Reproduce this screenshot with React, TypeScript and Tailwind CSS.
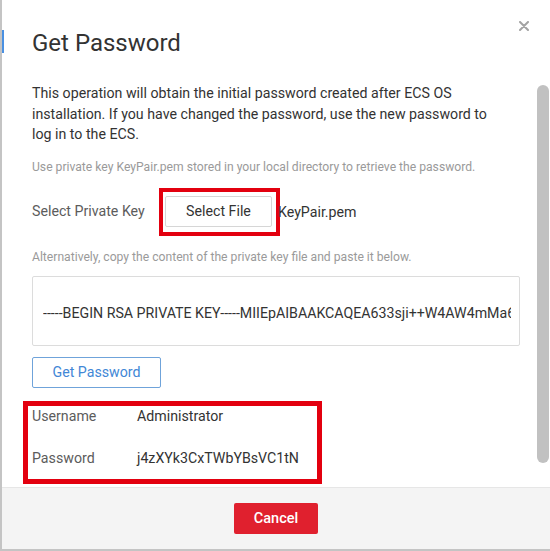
import React from "react";

export default function App() {
  return (
    <div className="relative w-[550px] h-[551px] bg-white border-l-2 border-b-2 border-[#c4c4c4] flex flex-col overflow-hidden font-['Roboto',sans-serif] text-[#333]">
      {/* background accent peeking at left edge */}
      <div className="absolute left-[-2px] top-[30px] w-[4px] h-[23px] bg-[#4a90e2]" />
      {/* close */}
      <div className="absolute left-[516px] top-[20px] w-[12px] h-[12px] flex items-center justify-center">
        <svg width="10" height="10" viewBox="0 0 10 10">
          <path d="M1 1 L9 9 M9 1 L1 9" stroke="#a3a3a3" strokeWidth="2" strokeLinecap="round" />
        </svg>
      </div>
      {/* scrollbar thumb */}
      <div className="absolute left-[535px] top-[85px] w-[12px] h-[378px] rounded-full bg-[#c1c1c1]" />

      <div className="flex-1 flex flex-col pl-[30px] pr-[30px] pt-[27px] overflow-hidden">
        <h1 className="text-[24px] leading-[32px] font-normal text-[#333]">Get Password</h1>
        <p className="mt-[24px] text-[14.2px] leading-[20.5px] text-[#333] w-[470px]">
          This operation will obtain the initial password created after ECS OS installation. If you have changed the password, use the new password to log in to the ECS.
        </p>
        <p className="mt-[13px] text-[12.15px] leading-[18px] text-[#9a9a9a] whitespace-nowrap">
          Use private key KeyPair.pem stored in your local directory to retrieve the password.
        </p>
        <div className="mt-[12px] flex items-center h-[48px]">
          <span className="w-[127px] text-[14.2px] leading-[20px] text-[#5c5c5c] -mt-[1px]">Select Private Key</span>
          <div className="border-4 border-[#e3000f] pl-[2px] pr-[4px] pt-[4px] pb-[5px]">
            <div className="w-[107px] h-[31px] border border-[#d6d6d6] rounded-[2px] flex items-center justify-center text-[14.2px] text-[#333] pt-[2px]">
              Select File
            </div>
          </div>
          <span className="-ml-[2px] text-[14.2px] leading-[20px] text-[#333] pt-[1px]">KeyPair.pem</span>
        </div>
        <p className="mt-[12px] text-[12.15px] leading-[18px] text-[#9a9a9a] whitespace-nowrap">
          Alternatively, copy the content of the private key file and paste it below.
        </p>
        <div className="mt-[10px] w-[488px] h-[70px] border border-[#dcdcdc] rounded-[2px] flex items-center pl-[10px] pr-[8px] overflow-hidden">
          <span className="whitespace-nowrap overflow-hidden text-[14.2px] leading-[20px] text-[#333] pt-[4px]">
            -----BEGIN RSA PRIVATE KEY-----MIIEpAIBAAKCAQEA633sji++W4AW4mMa6
          </span>
        </div>
        <div className="mt-[11px] w-[129px] h-[31px] border border-[#6fa3da] rounded-[2px] flex items-center justify-center text-[14.2px] text-[#4287d6] pt-[2px]">
          Get Password
        </div>
        <div className="mt-[13px] -ml-[9px] w-[299px] h-[83px] border-[5px] border-[#e3000f] pl-[4px] flex flex-col">
          <div className="flex text-[14.2px] leading-[20px]">
            <span className="w-[105px] text-[#5c5c5c]">Username</span>
            <span className="text-[#333]">Administrator</span>
          </div>
          <div className="mt-[22px] flex text-[14.2px] leading-[20px]">
            <span className="w-[105px] text-[#5c5c5c]">Password</span>
            <span className="text-[#333]">j4zXYk3CxTWbYBsVC1tN</span>
          </div>
        </div>
      </div>

      <div className="h-[62px] shrink-0 bg-[#f4f4f4] border-t border-[#e6e6e6] flex items-center justify-center">
        <div className="w-[84px] h-[31px] rounded-[2px] bg-[#e0202e] flex items-center justify-center text-[14.5px] font-medium text-white pt-[1px]">
          Cancel
        </div>
      </div>
    </div>
  );
}
